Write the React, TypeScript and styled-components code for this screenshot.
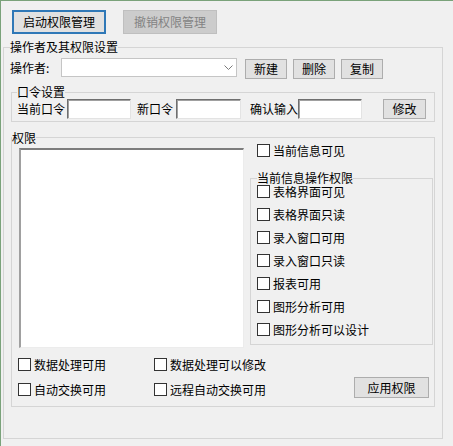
import * as React from "react";
import styled, { createGlobalStyle } from "styled-components";

const GlobalStyle = createGlobalStyle`
  html, body {
    margin: 0;
    padding: 0;
    background: #f0f0f0;
  }
  body {
    font-family: "Noto Sans CJK SC", "Noto Sans", sans-serif;
    font-size: 12px;
    color: #000;
  }
`;

const Window = styled.div`
  width: 453px;
  height: 446px;
  box-sizing: border-box;
  background: #f0f0f0;
  border-top: 1px solid #7aa27a;
  border-left: 1px solid #7aa27a;
  padding: 9px 0 0 2px;
  overflow: hidden;
`;

const TopBar = styled.div`
  display: flex;
  gap: 17px;
  padding-left: 9px;
  margin-bottom: 6px;
`;

const Button = styled.button<{ $w: number; $h: number; $focus?: boolean }>`
  width: ${(p) => p.$w}px;
  height: ${(p) => p.$h}px;
  box-sizing: border-box;
  padding: 0;
  margin: 0;
  font-family: inherit;
  font-size: 12px;
  line-height: 1;
  color: #000;
  background: #e1e1e1;
  border: 1px solid #adadad;
  ${(p) =>
    p.$focus &&
    `
    border-color: #2f78b7;
    box-shadow: inset 0 0 0 1px #2f78b7;
  `}
  &:disabled {
    background: #cccccc;
    border-color: #bfbfbf;
    color: #838383;
  }
`;

const Group = styled.fieldset<{ $width: number }>`
  margin: 0;
  padding: 0;
  min-width: 0;
  width: ${(p) => p.$width}px;
  box-sizing: border-box;
  border: 1px solid #d5d5d5;
`;

const Legend = styled.legend<{ $offset: number; $lh?: number }>`
  padding: 0;
  margin-left: ${(p) => p.$offset}px;
  font-size: 12px;
  line-height: ${(p) => p.$lh ?? 14}px;
`;

const OuterGroup = styled(Group)`
  margin-left: 0;
`;

const OuterBody = styled.div`
  padding: 4px 0 31px 0;
`;

const OperatorRow = styled.div`
  display: flex;
  align-items: flex-start;
  height: 20px;
  padding-left: 6px;
`;

const RowLabel = styled.span`
  width: 51px;
  line-height: 19px;
  white-space: nowrap;
`;

const Combo = styled.div`
  width: 176px;
  height: 19px;
  box-sizing: border-box;
  background: #fff;
  border: 1px solid #c5c5c5;
  display: flex;
  align-items: center;
  justify-content: flex-end;
  padding-right: 3px;
`;

const ButtonGroup = styled.div`
  display: flex;
  gap: 6px;
  margin-left: 8px;
  padding-top: 1px;
`;

const PasswordGroup = styled(Group)`
  margin: 7px 0 0 7px;
`;

const PasswordRow = styled.div`
  display: flex;
  align-items: center;
  height: 20px;
  padding: 0 0 2px 5px;
`;

const Caption = styled.span<{ $ml?: number }>`
  margin-left: ${(p) => p.$ml ?? 0}px;
  white-space: nowrap;
  line-height: 20px;
`;

const TextBox = styled.input<{ $w: number; $ml?: number }>`
  width: ${(p) => p.$w}px;
  height: 20px;
  margin: 0 0 0 ${(p) => p.$ml ?? 0}px;
  padding: 0 2px;
  box-sizing: border-box;
  font-family: inherit;
  font-size: 12px;
  background: #fff;
  border-style: solid;
  border-width: 1px;
  border-color: #6f6f6f #e3e3e3 #e3e3e3 #6f6f6f;
  box-shadow: inset 1px 1px 0 #a0a0a0;
  outline: none;
`;

const PermissionGroup = styled(Group)`
  margin: 9px 0 0 7px;
`;

const PermBody = styled.div`
  padding: 0 1px 8px 7px;
`;

const TopArea = styled.div`
  display: flex;
  align-items: flex-start;
`;

const ListBox = styled.div`
  width: 225px;
  height: 200px;
  margin-top: 4px;
  box-sizing: border-box;
  background: #fff;
  border-style: solid;
  border-width: 2px 1px 1px 2px;
  border-color: #7d7d7d #ececec #ececec #a0a0a0;
`;

const RightCol = styled.div`
  display: flex;
  flex-direction: column;
  margin-left: 6px;
`;

const TopCheck = styled.div`
  padding-left: 7px;
`;

const InnerGroup = styled(Group)`
  margin-top: 14px;
`;

const InnerBody = styled.div`
  display: flex;
  flex-direction: column;
  gap: 10px;
  padding: 0 0 8px 6px;
`;

const BottomArea = styled.div`
  display: flex;
  align-items: flex-start;
  margin-top: 10px;
  padding: 0 4px 0 0;
  margin-left: -1px;
`;

const CheckGrid = styled.div`
  display: grid;
  grid-template-columns: 136px auto;
  grid-auto-rows: 13px;
  row-gap: 12px;
`;

const ApplyButton = styled(Button)`
  margin-left: auto;
  margin-top: 19px;
`;

const CheckLabel = styled.label`
  display: flex;
  align-items: center;
  height: 13px;
  white-space: nowrap;
`;

const CheckBox = styled.span`
  width: 13px;
  height: 13px;
  box-sizing: border-box;
  border: 1px solid #333;
  background: #fff;
  flex: none;
`;

const CheckText = styled.span`
  margin-left: 3px;
  line-height: 13px;
`;

const Check: React.FC<{ text: string }> = ({ text }) => (
  <CheckLabel>
    <CheckBox />
    <CheckText>{text}</CheckText>
  </CheckLabel>
);

const Chevron = () => (
  <svg width="9" height="5" viewBox="0 0 9 5">
    <path d="M0.5 0.5 L4.5 4.5 L8.5 0.5" fill="none" stroke="#7a7a7a" strokeWidth="1" />
  </svg>
);

const operations = [
  "表格界面可见",
  "表格界面只读",
  "录入窗口可用",
  "录入窗口只读",
  "报表可用",
  "图形分析可用",
  "图形分析可以设计",
];

const bottomChecks = ["数据处理可用", "数据处理可以修改", "自动交换可用", "远程自动交换可用"];

const App: React.FC = () => {
  return (
    <>
      <GlobalStyle />
      <Window>
        <TopBar>
          <Button $w={94} $h={24} $focus>
            启动权限管理
          </Button>
          <Button $w={94} $h={24} disabled>
            撤销权限管理
          </Button>
        </TopBar>
        <OuterGroup $width={440}>
          <Legend $offset={6}>操作者及其权限设置</Legend>
          <OuterBody>
            <OperatorRow>
              <RowLabel>操作者:</RowLabel>
              <Combo>
                <Chevron />
              </Combo>
              <ButtonGroup>
                <Button $w={42} $h={20}>新建</Button>
                <Button $w={42} $h={20}>删除</Button>
                <Button $w={42} $h={20}>复制</Button>
              </ButtonGroup>
            </OperatorRow>
            <PasswordGroup $width={424}>
              <Legend $offset={5}>口令设置</Legend>
              <PasswordRow>
                <Caption>当前口令</Caption>
                <TextBox $w={64} $ml={2} readOnly />
                <Caption $ml={6}>新口令</Caption>
                <TextBox $w={65} $ml={3} readOnly />
                <Caption $ml={9}>确认输入</Caption>
                <TextBox $w={64} readOnly />
                <Button $w={43} $h={20} style={{ marginLeft: 21 }}>
                  修改
                </Button>
              </PasswordRow>
            </PasswordGroup>
            <PermissionGroup $width={424}>
              <Legend $offset={0} $lh={13}>权限</Legend>
              <PermBody>
                <TopArea>
                  <ListBox />
                  <RightCol>
                    <TopCheck>
                      <Check text="当前信息可见" />
                    </TopCheck>
                    <InnerGroup $width={183}>
                      <Legend $offset={6}>当前信息操作权限</Legend>
                      <InnerBody>
                        {operations.map((op) => (
                          <Check key={op} text={op} />
                        ))}
                      </InnerBody>
                    </InnerGroup>
                  </RightCol>
                </TopArea>
                <BottomArea>
                  <CheckGrid>
                    {bottomChecks.map((c) => (
                      <Check key={c} text={c} />
                    ))}
                  </CheckGrid>
                  <ApplyButton $w={75} $h={21}>应用权限</ApplyButton>
                </BottomArea>
              </PermBody>
            </PermissionGroup>
          </OuterBody>
        </OuterGroup>
      </Window>
    </>
  );
};

export default App;
